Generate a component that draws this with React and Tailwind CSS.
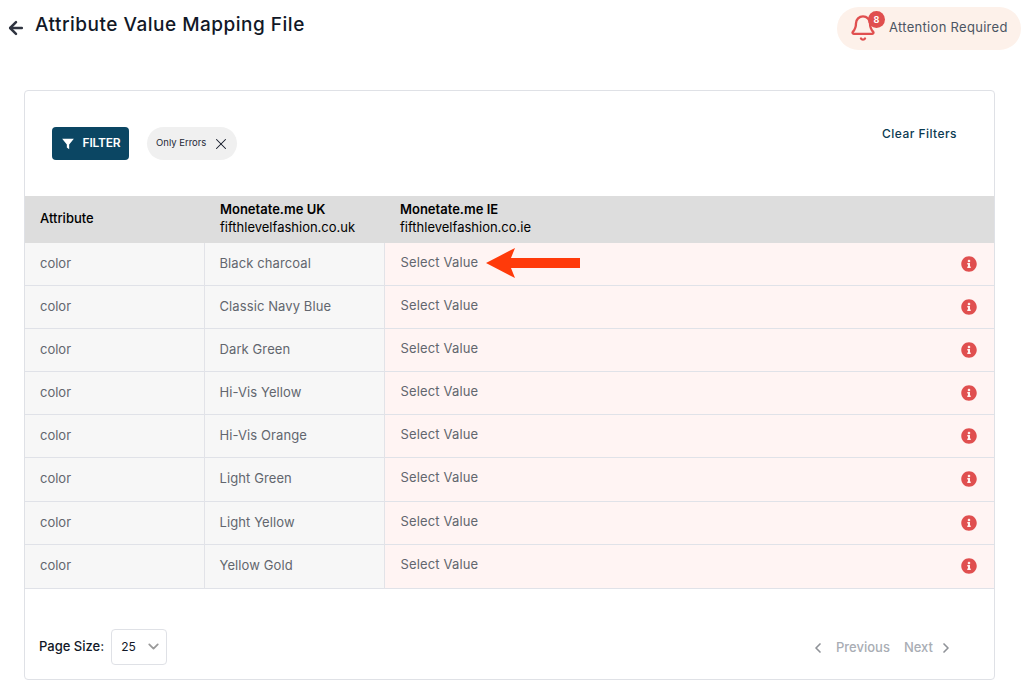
import React from 'react';
import { ArrowLeft, Bell, ChevronDown, ChevronLeft, ChevronRight, X } from 'lucide-react';

const rows = ['Black charcoal', 'Classic Navy Blue', 'Dark Green', 'Hi-Vis Yellow', 'Hi-Vis Orange', 'Light Green', 'Light Yellow', 'Yellow Gold'];

const InfoIcon = () => (
    <svg viewBox="0 0 512 512" className="w-4 h-4 fill-[#e04f4f]">
        <path d="M256 8C119 8 8 119 8 256s111 248 248 248 248-111 248-248S393 8 256 8zm0 110c23 0 42 19 42 42s-19 42-42 42-42-19-42-42 19-42 42-42zm56 254c0 7-5 12-12 12h-88c-7 0-12-5-12-12v-24c0-7 5-12 12-12h12v-64h-12c-7 0-12-5-12-12v-24c0-7 5-12 12-12h64c7 0 12 5 12 12v100h12c7 0 12 5 12 12v24z" />
    </svg>
);

const App = () => {
    return (
        <div className="w-[1030px] h-[687px] overflow-hidden bg-white font-['Inter','Liberation_Sans',sans-serif] pl-6 pr-[35px]">
            {/* Cabecera */}
            <div className="h-[90px] -ml-6 -mr-[26px] pl-[6px] pt-[7px] flex items-start justify-between">
                <div className="flex items-start gap-[9px] pt-[5px]">
                    <ArrowLeft size={20} strokeWidth={3} className="text-[#2f3440] mt-[6px]" />
                    <h1 className="text-[19px] leading-6 font-medium text-[#111827] tracking-[0.5px] mt-px">Attribute Value Mapping File</h1>
                </div>
                <div className="relative w-[184px] h-[43px] rounded-full bg-[#fdf1ea] flex items-center pl-[52px]">
                    <Bell size={28} strokeWidth={2} className="absolute left-[12px] top-[7px] text-[#e04f4f]" />
                    <span className="absolute left-[31px] top-[4px] w-[17px] h-[17px] rounded-full bg-[#e04f4f] text-white text-[9px] font-bold flex items-center justify-center">8</span>
                    <span className="text-[13px] text-[#4b5563] tracking-[0.3px] whitespace-nowrap -mt-0.5">Attention Required</span>
                </div>
            </div>

            {/* Tarjeta */}
            <div className="relative w-[971px] h-[590px] border border-[#dfe1e6] rounded">
                <div className="h-[105px] pl-[27px] pr-[37px] pt-[36px] flex items-start justify-between">
                    <div className="flex items-center gap-[18px]">
                        <button className="w-[77px] h-[33px] rounded bg-[#0b4663] text-white text-xs font-semibold flex items-center justify-center gap-2">
                            <svg viewBox="0 0 24 24" className="w-3.5 h-3.5 fill-white"><path d="M2 3h20l-8 10v8l-4-3v-5z" /></svg>
                            <span className="-mt-px tracking-[-0.2px]">FILTER</span>
                        </button>
                        <div className="w-[90px] h-[33px] rounded-full bg-[#f0f0f0] flex items-center pl-[9px] gap-[6px]">
                            <span className="text-[9.5px] text-[#1f2937] whitespace-nowrap">Only Errors</span>
                            <X size={18} strokeWidth={1.4} className="text-[#111827]" />
                        </div>
                    </div>
                    <span className="text-xs font-medium text-[#0b3a52] tracking-[0.45px] mt-[-1px]">Clear Filters</span>
                </div>

                <table className="w-[969px] table-fixed border-collapse text-[13px]">
                    <thead>
                        <tr className="h-[47px] bg-[#dddddd] text-left text-black">
                            <th className="w-[179px] pl-[15px] pb-[2px] font-medium">Attribute</th>
                            <th className="w-[180px] pl-[16px] pb-[3px] font-normal leading-[18px]">
                                <div className="font-semibold">Monetate.me UK</div>
                                <div>fifthlevelfashion.co.uk</div>
                            </th>
                            <th className="pl-[16px] pb-[3px] font-normal leading-[18px]">
                                <div className="font-semibold">Monetate.me IE</div>
                                <div>fifthlevelfashion.co.ie</div>
                            </th>
                        </tr>
                    </thead>
                    <tbody>
                        {rows.map((name, i) => (
                            <tr key={name} className={`border-b border-[#e0e2e8] ${i === 5 || i === 7 ? 'h-[44px]' : i === 0 ? 'h-[42px]' : 'h-[43px]'}`}>
                                <td className="pl-[15px] bg-[#f7f7f7] border-r border-[#e2e3e8] text-[#62666e]">color</td>
                                <td className="pl-[15px] bg-[#f7f7f7] border-r border-[#e2e3e8] text-[#62666e] tracking-[0.1px]">{name}</td>
                                <td className="bg-[#fff4f3] text-[#62666e]">
                                    <div className="flex items-center justify-between pl-[16px] pr-[17px]">
                                        <span className="-mt-0.5 tracking-[0.15px]">Select Value</span>
                                        <InfoIcon />
                                    </div>
                                </td>
                            </tr>
                        ))}
                    </tbody>
                </table>

                {/* Flecha sobre la primera fila */}
                <svg viewBox="0 0 94 30" className="absolute left-[461px] top-[157px] w-[94px] h-[30px] fill-[#ff3a0a]">
                    <path d="M0 15 L29 0 L25 10 H94 V20 H25 L29 30 Z" />
                </svg>

                <div className="pt-[40px] pl-[14px] pr-[40px] flex items-center justify-between">
                    <div className="flex items-center gap-[7px]">
                        <span className="text-[13px] text-[#111827] font-medium mt-px">Page Size:</span>
                        <div className="w-[56px] h-[36px] rounded border border-[#dfe1e6] flex items-center justify-between pl-[9px] pr-[4px]">
                            <span className="text-xs text-[#111827]">25</span>
                            <ChevronDown size={17} strokeWidth={2.5} className="text-[#9a9a9a]" />
                        </div>
                    </div>
                    <div className="flex items-center text-[13px] font-medium text-[#a9adb4] mt-[2px]">
                        <ChevronLeft size={16} strokeWidth={2.5} className="text-[#8f9298] mr-[10px]" />
                        <span className="mr-[14px]">Previous</span>
                        <span className="mr-[5px]">Next</span>
                        <ChevronRight size={16} strokeWidth={2.5} className="text-[#8f9298]" />
                    </div>
                </div>
            </div>
        </div>
    );
};

export default App;
